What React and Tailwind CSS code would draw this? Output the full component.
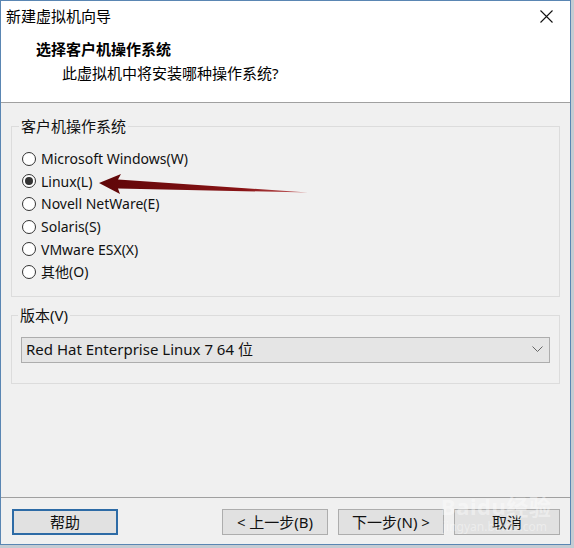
import { useState } from 'react'

const options = [
  'Microsoft Windows(W)',
  'Linux(L)',
  'Novell NetWare(E)',
  'Solaris(S)',
  'VMware ESX(X)',
  '其他(O)',
]

const Radio = ({ checked, label, onClick }) => (
  <div className="flex items-center h-[22.6px] cursor-default" onClick={onClick}>
    <span className="w-[14px] h-[14px] rounded-full border border-[#333] bg-white flex items-center justify-center">
      {checked && <span className="w-[8px] h-[8px] rounded-full bg-[#333]" />}
    </span>
    <span className="ml-[5px] text-[14px] text-[#111]">{label}</span>
  </div>
)

const Button = ({ children, primary }) => (
  <button
    className={
      primary
        ? 'w-[106px] h-[26px] bg-[#e1e1e1] border-2 border-[#2d6ba6] text-[15px] text-[#111]'
        : 'w-[106px] h-[26px] bg-[#e1e1e1] border border-[#adadad] text-[15px] text-[#111]'
    }
  >
    {children}
  </button>
)

export default function App() {
  const [os, setOs] = useState(1)

  return (
    <div className="w-[574px] h-[548px] bg-[#c4ccd3] font-['Noto_Sans','Noto_Sans_CJK_SC',sans-serif]">
      <div className="relative w-[571px] h-[545px] border border-[#5a86b3] bg-[#f0f0f0] flex flex-col overflow-hidden">
        {/* title bar */}
        <div className="h-[31px] bg-white flex items-center justify-between pl-[5px] pr-[17px]">
          <span className="text-[15px] text-black">新建虚拟机向导</span>
          <svg width="13" height="13" viewBox="0 0 13 13">
            <path d="M0.5 0.5 L12.5 12.5 M12.5 0.5 L0.5 12.5" stroke="#111" strokeWidth="1.1" />
          </svg>
        </div>

        {/* header */}
        <div className="h-[71px] bg-white border-b border-[#a0a0a0] pl-[35px] pt-[6px]">
          <div className="text-[15px] font-bold text-black leading-[22px]">选择客户机操作系统</div>
          <div className="text-[15px] text-black leading-[22px] pl-[26px] mt-[2px]">此虚拟机中将安装哪种操作系统?</div>
        </div>

        {/* body */}
        <div className="flex-1 px-[10px] pt-[12px]">
          <fieldset className="border border-[#dcdcdc] px-[10px] pb-[13px] pt-[10px]">
            <legend className="px-[2px] ml-[-3px] text-[15px] text-[#111]">客户机操作系统</legend>
            {options.map((o, i) => (
              <Radio key={o} label={o} checked={os === i} onClick={() => setOs(i)} />
            ))}
          </fieldset>

          <fieldset className="mt-[7px] border border-[#dcdcdc] px-[9px] pt-[10px] pb-[20px]">
            <legend className="px-[2px] ml-[-3px] text-[15px] text-[#111]">版本(V)</legend>
            <div className="h-[26px] bg-[#e5e5e5] border border-[#adadad] flex items-center justify-between pl-[4px] pr-[6px]">
              <span className="text-[15px] text-[#111]">Red Hat Enterprise Linux 7 64 位</span>
              <svg width="11" height="7" viewBox="0 0 11 7">
                <path d="M0.5 0.5 L5.5 5.5 L10.5 0.5" fill="none" stroke="#666" strokeWidth="1" />
              </svg>
            </div>
          </fieldset>
        </div>

        {/* footer */}
        <div className="h-[47px] border-t border-[#a0a0a0] flex items-start pt-[11px] pl-[11px] pr-[10px]">
          <Button primary>帮助</Button>
          <div className="flex-1" />
          <div className="flex gap-[10px]">
            <Button>&lt; 上一步(B)</Button>
            <Button>下一步(N) &gt;</Button>
            <Button>取消</Button>
          </div>
        </div>

        {/* red arrow annotation */}
        <svg className="absolute left-0 top-0 pointer-events-none" width="571" height="545">
          <defs>
            <linearGradient id="arr" x1="0" y1="0" x2="1" y2="0">
              <stop offset="0" stopColor="#5e0608" />
              <stop offset="0.7" stopColor="#8a1416" />
              <stop offset="1" stopColor="#c86466" />
            </linearGradient>
          </defs>
          <polygon
            points="98,182 120,173 117,178.5 307,191.5 117,187.5 119,193"
            fill="url(#arr)"
          />
        </svg>

        {/* watermark */}
        <div className="absolute left-[440px] top-[494px] text-white/40 pointer-events-none leading-none whitespace-nowrap">
          <div className="text-[22px] font-bold tracking-wide">Baidu经验</div>
          <div className="text-[12px] mt-[4px] pl-[2px]">jingyan.baidu.com</div>
        </div>
      </div>
    </div>
  )
}
